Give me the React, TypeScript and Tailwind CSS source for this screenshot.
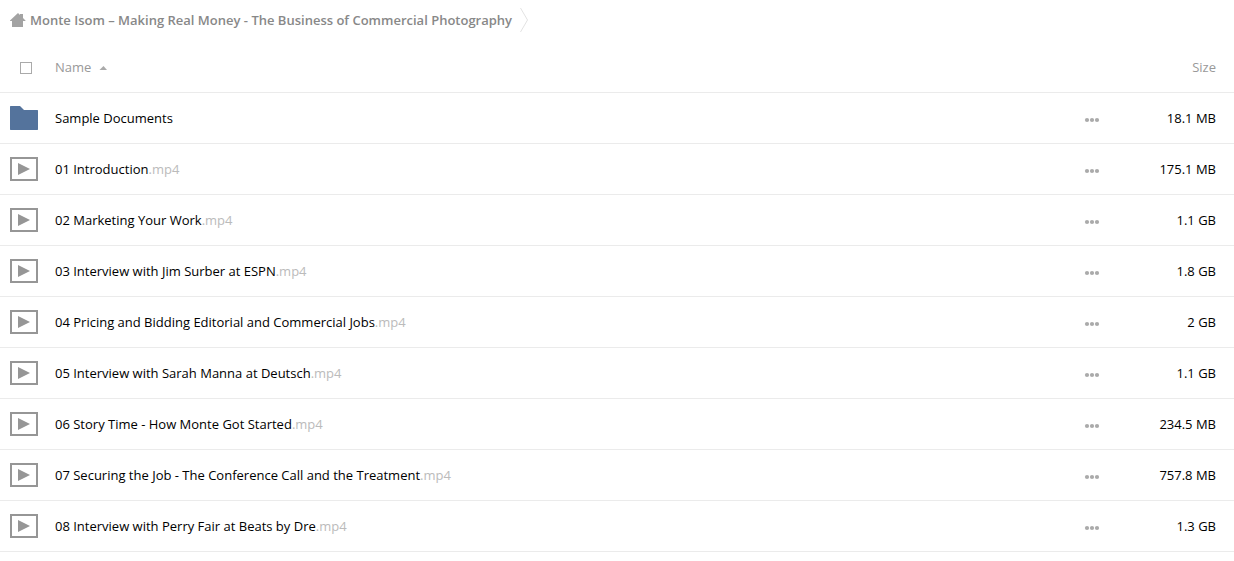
import { useState } from 'react';

type Item = {
    name: string;
    ext?: string;
    size: string;
};

const items: Item[] = [
    { name: 'Sample Documents', size: '18.1 MB' },
    { name: '01 Introduction', ext: '.mp4', size: '175.1 MB' },
    { name: '02 Marketing Your Work', ext: '.mp4', size: '1.1 GB' },
    { name: '03 Interview with Jim Surber at ESPN', ext: '.mp4', size: '1.8 GB' },
    { name: '04 Pricing and Bidding Editorial and Commercial Jobs', ext: '.mp4', size: '2 GB' },
    { name: '05 Interview with Sarah Manna at Deutsch', ext: '.mp4', size: '1.1 GB' },
    { name: '06 Story Time - How Monte Got Started', ext: '.mp4', size: '234.5 MB' },
    { name: '07 Securing the Job - The Conference Call and the Treatment', ext: '.mp4', size: '757.8 MB' },
    { name: '08 Interview with Perry Fair at Beats by Dre', ext: '.mp4', size: '1.3 GB' },
];

const HomeIcon = () => (
    <svg className="h-4 w-4 shrink-0" viewBox="0 0 16 16" fill="#a3a3a3" aria-hidden="true">
        <path d="M8 1 L10 3 V2 H13 V6 L15.5 8.5 V9 H13 V15 H2 V9 H0 V8.5 Z" />
    </svg>
);

const FolderIcon = () => (
    <svg className="block h-6 w-7" viewBox="0 0 28 24" fill="#54739c" aria-hidden="true">
        <path d="M0.5 0 H10 L14 4 H27.5 L28 4.5 V23.5 L27.5 24 H0.5 L0 23.5 V0.5 Z" />
    </svg>
);

const VideoIcon = () => (
    <svg className="block h-6 w-7" viewBox="0 0 28 24" aria-hidden="true">
        <rect x="1" y="1" width="26" height="22" fill="none" stroke="#969696" strokeWidth="2" />
        <path d="M8 6 L20 12 L8 18 Z" fill="#969696" />
    </svg>
);

const DotsIcon = () => (
    <svg className="h-4 w-4" viewBox="0 0 16 16" fill="#aaaaaa" aria-hidden="true">
        <circle cx="3" cy="10" r="2.1" />
        <circle cx="8" cy="10" r="2.1" />
        <circle cx="13" cy="10" r="2.1" />
    </svg>
);

const App = () => {
    const [checked, setChecked] = useState(false);
    const [ascending, setAscending] = useState(true);

    const rows = ascending ? items : [...items].reverse();

    return (
        <div className="min-h-screen bg-white font-['Open_Sans',sans-serif] text-[13px] leading-5 text-black">
            <nav className="flex h-[42px] items-start pt-[10px] pl-[10px]">
                <a href="#" className="flex items-center gap-1 font-semibold text-[#888888]">
                    <HomeIcon />
                    <span>Monte Isom – Making Real Money - The Business of Commercial Photography</span>
                </a>
                <svg className="-mt-1 ml-2 h-7 w-2 shrink-0" viewBox="0 0 8 28" fill="none" stroke="#e2e2e2" aria-hidden="true">
                    <path d="M0.5 2 L7.5 14 L0.5 26" />
                </svg>
            </nav>

            <table className="w-full table-fixed border-separate border-spacing-0">
                <thead>
                    <tr className="h-[51px] text-[#999999]">
                        <th className="w-[55px] border-b border-[#ebebeb] p-0 pl-5 text-left">
                            <input
                                type="checkbox"
                                aria-label="Select all"
                                checked={checked}
                                onChange={(e) => setChecked(e.target.checked)}
                                className="mt-px block h-3 w-3 appearance-none border border-[#aaaaaa] bg-white checked:bg-[#aaaaaa]"
                            />
                        </th>
                        <th className="border-b border-[#ebebeb] p-0 text-left font-normal">
                            <button type="button" onClick={() => setAscending(!ascending)} className="flex items-center gap-2">
                                <span>Name</span>
                                <svg className="h-2 w-2" viewBox="0 0 8 8" fill="#aaaaaa" aria-hidden="true">
                                    <path d="M0.5 7 L4.5 3 L8 7 Z" />
                                </svg>
                            </button>
                        </th>
                        <th className="w-[50px] border-b border-[#ebebeb] p-0"></th>
                        <th className="w-[117px] border-b border-[#ebebeb] p-0 pr-[18px] text-right font-normal">Size</th>
                    </tr>
                </thead>
                <tbody>
                    {rows.map((item) => (
                        <tr key={item.name} className="h-[51px]">
                            <td className="border-b border-[#ebebeb] p-0 pl-[10px]">
                                {item.ext ? <VideoIcon /> : <FolderIcon />}
                            </td>
                            <td className="truncate border-b border-[#ebebeb] p-0">
                                <a href="#">
                                    {item.name}
                                    <span className="text-[#bbbbbb]">{item.ext}</span>
                                </a>
                            </td>
                            <td className="border-b border-[#ebebeb] p-0">
                                <button type="button" aria-label="More actions" className="ml-[17px] flex items-center">
                                    <DotsIcon />
                                </button>
                            </td>
                            <td className="border-b border-[#ebebeb] p-0 pr-[18px] text-right">{item.size}</td>
                        </tr>
                    ))}
                </tbody>
            </table>
        </div>
    )
}

export default App
